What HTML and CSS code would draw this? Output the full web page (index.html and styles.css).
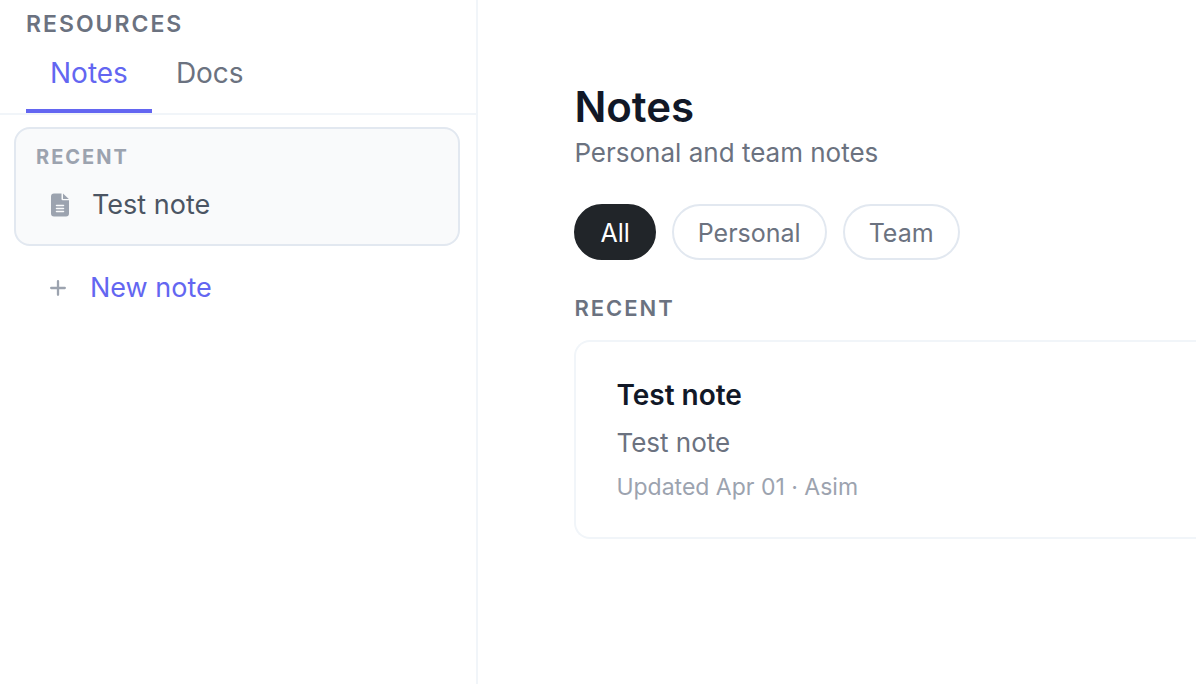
FILE: index.html
```
<!DOCTYPE html>
<html lang="en">
<head>
    <meta charset="UTF-8">
    <meta name="viewport" content="width=device-width, initial-scale=1.0">
    <title>Notes</title>
    <link rel="stylesheet" href="styles.css">
</head>
<body>
    <div class="layout">
        <!-- Sidebar -->
        <aside class="sidebar">
            <h2 class="sidebar-title">RESOURCES</h2>
            <nav class="tabs">
                <a href="#notes" class="tab active">Notes</a>
                <a href="#docs" class="tab">Docs</a>
            </nav>

            <div class="recent-box">
                <h3 class="recent-title">RECENT</h3>
                <a href="#test-note" class="recent-link">
                    <svg class="icon" viewBox="0 0 20 24" aria-hidden="true">
                        <path fill="#9ca3af" d="M4 0.500h7.500V6A1.200 1.200 0 0 0 12.700 7.200H19V20.500a3 3 0 0 1-3 3H4a3 3 0 0 1-3-3v-17a3 3 0 0 1 3-3z"/>
                        <path fill="#9ca3af" d="M13 0.500 18.800 6H13z"/>
                        <path stroke="#f9fafb" stroke-width="1.500" stroke-linecap="round" d="M6.500 12.500h7M6.500 15.500h7M6.500 18.500h7"/>
                    </svg>
                    <span>Test note</span>
                </a>
            </div>

            <button type="button" class="new-note">
                <svg class="plus" viewBox="0 0 16 16" aria-hidden="true">
                    <path fill="none" stroke="#9ca3af" stroke-width="2.300" stroke-linecap="round" d="M8 1.200v13.600M1.200 8h13.600"/>
                </svg>
                <span>New note</span>
            </button>
        </aside>

        <!-- Notes list -->
        <main class="content">
            <h1>Notes</h1>
            <p class="subtitle">Personal and team notes</p>

            <div class="filters">
                <button type="button" class="filter active">All</button>
                <button type="button" class="filter">Personal</button>
                <button type="button" class="filter">Team</button>
            </div>

            <h2 class="section-title">RECENT</h2>
            <article class="note-card">
                <h3>Test note</h3>
                <p class="note-text">Test note</p>
                <p class="note-meta">Updated Apr 01 · Asim</p>
            </article>
        </main>
    </div>
</body>
</html>
```
FILE: styles.css
```
* {
    box-sizing: border-box;
}

body {
    margin: 0;
    font-family: Inter, sans-serif;
    background-color: #fff;
    color: #111827;
}

h1, h2, h3, p {
    margin: 0;
}

button {
    font-family: inherit;
    cursor: pointer;
}

.layout {
    display: flex;
    min-height: 100vh;
    overflow: hidden;
}

/* Sidebar */
.sidebar {
    flex: 0 0 40%;
    border-right: 2px solid #f1f5f9;
}

.sidebar-title {
    padding: 8px 26px 0;
    font-size: 23px;
    line-height: 32px;
    font-weight: 600;
    letter-spacing: 2px;
    color: #6b7280;
}

.tabs {
    display: flex;
    padding: 0 26px;
    border-bottom: 2px solid #f1f5f9;
}

.tab {
    padding: 13px 24px 16px;
    border-bottom: 4px solid transparent;
    font-size: 28px;
    line-height: 40px;
    color: #6b7280;
    text-decoration: none;
}

.tab.active {
    color: #6366f1;
    border-bottom-color: #6366f1;
}

.recent-box {
    margin: 12px 16px 0 14px;
    padding: 12px 20px;
    background-color: #f9fafb;
    border: 2px solid #e2e8f0;
    border-radius: 16px;
}

.recent-title {
    font-size: 20px;
    line-height: 32px;
    font-weight: 700;
    letter-spacing: 2px;
    color: #9ca3af;
}

.recent-link {
    display: flex;
    align-items: center;
    gap: 22px;
    padding: 14px 14px 9px;
    font-size: 27px;
    line-height: 36px;
    color: #4b5563;
    text-decoration: none;
}

.icon {
    width: 20px;
    height: 24px;
}

.plus {
    width: 16px;
    height: 16px;
}

.new-note {
    display: flex;
    align-items: center;
    gap: 24px;
    margin: 12px 16px 0 14px;
    padding: 12px 36px;
    border: none;
    background: none;
    font-size: 27px;
    line-height: 36px;
    color: #6366f1;
}

/* Content */
.content {
    flex: 1 0 auto;
    padding: 81px 0 80px 96px;
}

h1 {
    font-size: 42px;
    line-height: 52px;
    font-weight: 600;
}

.subtitle {
    font-size: 26px;
    line-height: 40px;
    color: #6b7280;
}

.filters {
    display: flex;
    gap: 16px;
    margin-top: 31px;
}

.filter {
    padding: 9px 24px 7px;
    border: 2px solid #e2e8f0;
    border-radius: 28px;
    background-color: #fff;
    font-size: 25px;
    line-height: 36px;
    color: #6b7280;
}

.filter.active {
    background-color: #212529;
    border-color: #212529;
    color: #fff;
}

.section-title {
    margin-top: 32px;
    font-size: 22px;
    line-height: 32px;
    font-weight: 600;
    letter-spacing: 2px;
    color: #6b7280;
}

.note-card {
    margin-top: 16px;
    padding: 32px 40px;
    border: 2px solid #f1f5f9;
    border-right: none;
    border-radius: 16px 0 0 16px;
}

.note-card h3 {
    font-size: 28px;
    line-height: 42px;
    font-weight: 600;
}

.note-text {
    margin-top: 8px;
    font-size: 26px;
    line-height: 38px;
    color: #6b7280;
}

.note-meta {
    margin-top: 8px;
    font-size: 23px;
    line-height: 35px;
    color: #9ca3af;
}
```
